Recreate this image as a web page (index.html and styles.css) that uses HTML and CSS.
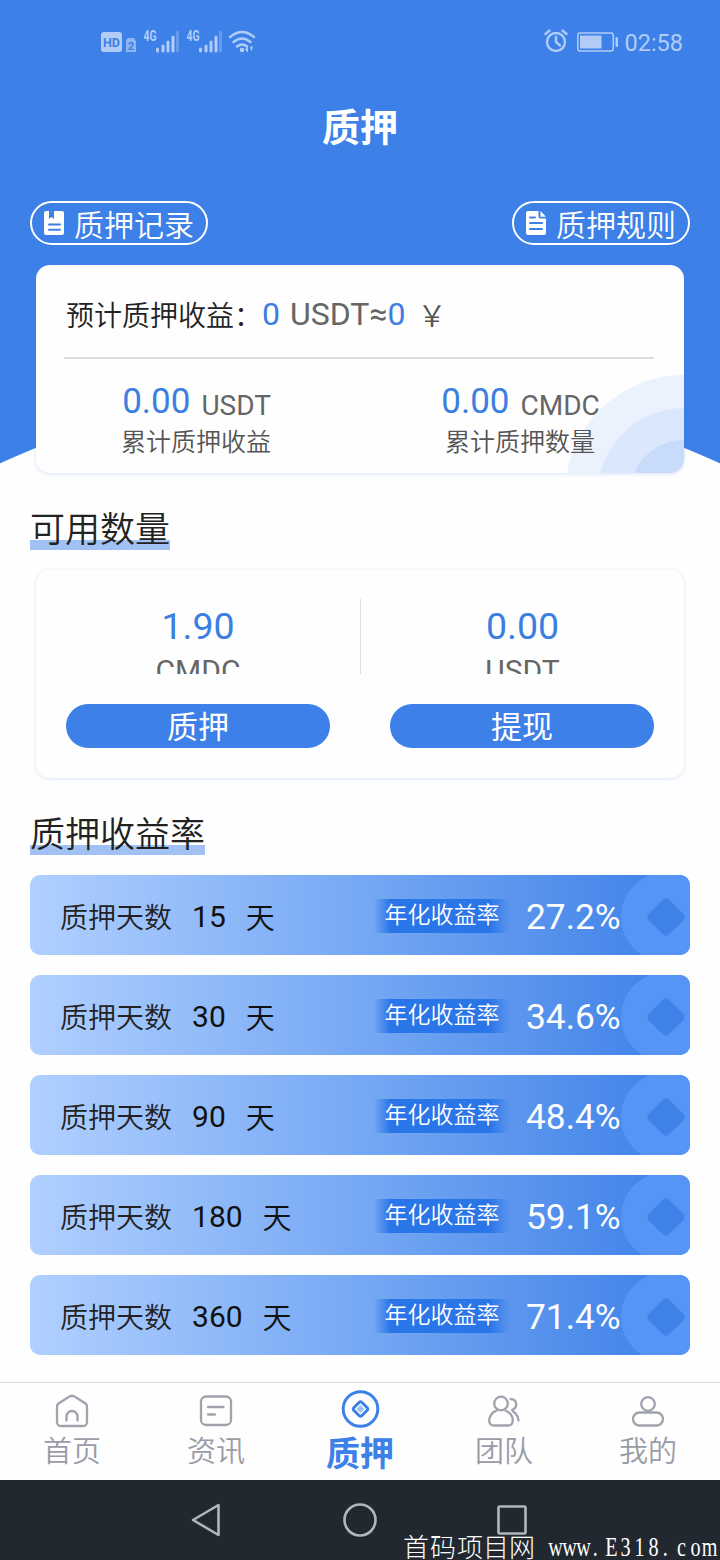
FILE: index.html
```
<!DOCTYPE html>
<html lang="zh-CN">
<head>
    <meta charset="UTF-8">
    <meta name="viewport" content="width=device-width, initial-scale=1.0">
    <title>质押</title>
    <link rel="stylesheet" href="styles.css">
</head>
<body>
    <div class="hero">
        <div class="status">
            <svg class="status__left" width="158" height="28" viewBox="0 0 158 28">
                <rect x="1" y="4" width="21" height="20" rx="3"/>
                <text class="status__hd" x="3" y="18.5" textLength="17" lengthAdjust="spacingAndGlyphs">HD</text>
                <path d="M28 10h6l2 3v11H26V12z" opacity=".7"/>
                <text class="status__two" x="27.8" y="22">2</text>
                <text class="status__net" x="43.5" y="12.5" textLength="13" lengthAdjust="spacingAndGlyphs">4G</text>
                <path class="bars" d="M57.5 23v-2M63 23v-5M68 23v-9M73 23V9"/>
                <path class="bars bars_dim" d="M77.500 23V4"/>
                <text class="status__net" x="86.5" y="12.5" textLength="13" lengthAdjust="spacingAndGlyphs">4G</text>
                <path class="bars" d="M100.500 23v-2M106 23v-5M111 23v-9M116 23V9"/>
                <path class="bars bars_dim" d="M120.500 23V4"/>
                <path class="wifi" d="M130 9q12-10 24 0M133.500 14q8.500-7 17 0M137 18.500q5-4 10 0"/>
                <circle cx="142" cy="22" r="2.300"/>
                <path d="M145 21.500l3-3v6zM150 18.500h3l-1.500 5z"/>
            </svg>
            <div class="status__right">
                <svg width="76" height="28" viewBox="0 0 76 28">
                    <circle class="clock" cx="13" cy="14" r="9"/>
                    <path class="clock" d="M13 9v5l4 3.500M2.500 6l4-3.500M19.500 2.500l4 3.500"/>
                    <rect class="clock clock_thin" x="34.800" y="5" width="35.500" height="18" rx="2.500"/>
                    <rect x="37" y="7.500" width="21.500" height="13"/>
                    <rect x="72.500" y="9" width="2.500" height="10" rx="1"/>
                </svg>
                <span>02:58</span>
            </div>
        </div>
        <h1 class="title">质押</h1>
        <div class="links">
            <a class="pill">
                <svg width="20" height="24" viewBox="0 0 20 24">
                    <path fill="#fff" d="M2 0h3v8l2.500-2L10 8V0h8a2 2 0 0 1 2 2v20a2 2 0 0 1-2 2H2a2 2 0 0 1-2-2V2a2 2 0 0 1 2-2z"/>
                    <path class="lines" d="M5 13.500h11M5 18.800h11"/>
                </svg>
                <span>质押记录</span>
            </a>
            <a class="pill">
                <svg width="20" height="24" viewBox="0 0 20 24">
                    <path fill="#fff" d="M2 0h10.500v5.500a2 2 0 0 0 2 2H20V22a2 2 0 0 1-2 2H2a2 2 0 0 1-2-2V2a2 2 0 0 1 2-2zM14.500 0L20 5.700h-5.500z"/>
                    <path class="lines" d="M4 6.500h5M4 12h12M4 18h12"/>
                </svg>
                <span>质押规则</span>
            </a>
        </div>
    </div>

    <div class="card income">
        <svg class="income__waves" width="119" height="98" viewBox="0 0 119 98">
            <circle cx="119" cy="119" r="119" fill="#ebf1fd"/>
            <circle cx="119" cy="119" r="86" fill="#dae7fc"/>
            <circle cx="119" cy="119" r="54" fill="#c8dbfa"/>
        </svg>
        <div class="income__top">
            <span class="income__label">预计质押收益：</span><b>0</b><span class="income__unit">USDT≈</span><b>0</b><span class="income__yen">￥</span>
        </div>
        <div class="income__row">
            <div class="income__item">
                <div class="income__sum"><b>0.00</b><span>USDT</span></div>
                <p>累计质押收益</p>
            </div>
            <div class="income__item">
                <div class="income__sum"><b>0.00</b><span>CMDC</span></div>
                <p>累计质押数量</p>
            </div>
        </div>
    </div>

    <h2 class="heading">可用数量</h2>
    <div class="card balance">
        <div class="balance__item">
            <div class="balance__info"><b>1.90</b><span>CMDC</span></div>
            <button type="button" class="button">质押</button>
        </div>
        <div class="balance__item">
            <div class="balance__info"><b>0.00</b><span>USDT</span></div>
            <button type="button" class="button">提现</button>
        </div>
    </div>

    <h2 class="heading heading_rates">质押收益率</h2>
    <div class="rates" id="rates"></div>

    <div class="tabs">
        <a class="tab">
            <svg width="40" height="40" viewBox="0 0 40 40">
                <path d="M17.500 5.500L6.500 12.500Q5 13.500 5 15.500V31a4 4 0 0 0 4 4h22a4 4 0 0 0 4-4V15.500q0-2-1.500-3L22.500 5.500Q20 4 17.500 5.500zM14.500 29.500V25.500a5.500 5.500 0 0 1 11 0v4"/>
            </svg>
            <span>首页</span>
        </a>
        <a class="tab">
            <svg width="40" height="40" viewBox="0 0 40 40">
                <rect x="5" y="5.500" width="30" height="28.500" rx="5"/>
                <path d="M12 16h15.500M12 23.500h7"/>
            </svg>
            <span>资讯</span>
        </a>
        <a class="tab tab_active">
            <svg width="40" height="40" viewBox="0 0 40 40">
                <circle cx="20.500" cy="18" r="17.300"/>
                <path d="M19 11.500L14 16.500q-1.500 1.500 0 3L19 24.500q1.500 1.500 3 0L27 19.500q1.500-1.500 0-3L22 11.500q-1.500-1.500-3 0z"/>
                <path class="tab__core" d="M20.500 14l4 4-4 4-4-4z"/>
            </svg>
            <span>质押</span>
        </a>
        <a class="tab">
            <svg width="40" height="40" viewBox="0 0 40 40">
                <circle cx="17" cy="12.500" r="6.800"/>
                <path d="M12.500 19.500Q5 23 5.200 30Q5.500 34.500 10 34.500H24Q28.500 34.500 28.800 30Q29 23 21.500 19.500M26.500 8.200c6.500 0 8 8 1.500 10.800M29 20.500q5 3 5.500 9"/>
            </svg>
            <span>团队</span>
        </a>
        <a class="tab">
            <svg width="40" height="40" viewBox="0 0 40 40">
                <circle cx="20" cy="13" r="6.800"/>
                <rect x="5" y="21.500" width="30" height="13" rx="6.500"/>
            </svg>
            <span>我的</span>
        </a>
    </div>

    <div class="navbar">
        <svg width="720" height="80" viewBox="0 0 720 80">
            <path class="navbar__icon" d="M193 40L218.500 25V55z"/>
            <circle class="navbar__icon" cx="360" cy="40" r="15.500"/>
            <rect class="navbar__icon" x="498.500" y="26.500" width="27" height="27" rx="1"/>
        </svg>
        <svg class="watermark" width="318" height="40" viewBox="0 0 318 40">
            <text class="watermark__cn" x="1 28 55 81 107" y="36.5">首码项目网</text>
            <text class="watermark__url" transform="scale(.72 1)" x="213.200 232.600 252.100 268.500 291 310.400 329.900 349.300 365.500 388.200 407.600 427.100" y="36">www.E318.com</text>
        </svg>
    </div>

    <script>
        let list = [
            [15, '27.2%'],
            [30, '34.6%'],
            [90, '48.4%'],
            [180, '59.1%'],
            [360, '71.4%']
        ];

        for (let item of list)
        {
            let div = document.createElement('div');
            div.className = 'rate';
            div.innerHTML = `<span class="rate__label">质押天数</span>
                <span class="rate__days">${item[0]}</span>
                <span class="rate__unit">天</span>
                <span class="rate__tag">年化收益率</span>
                <span class="rate__value">${item[1]}</span>
                <svg class="rate__coin" width="69" height="80" viewBox="0 0 69 80">
                    <circle cx="45" cy="42" r="45" fill="#5595f5"/>
                    <rect x="30.500" y="27.500" width="29" height="29" rx="4.500" transform="rotate(45 45 42)" fill="#4083e8"/>
                </svg>`;
            rates.append(div);
        }
    </script>
</body>
</html>
```
FILE: styles.css
```
* {
    box-sizing: border-box;
    margin: 0px;
    padding: 0px;
}
body {
    width: 720px;
    height: 1560px;
    overflow: hidden;
    background-color: #fefefe;
    font-family: Roboto, "Noto Sans CJK SC", sans-serif;
    font-weight: 350;
    color: #222;
}
b {
    font-weight: 400;
    color: #3c7fe0;
}
svg {
    display: block;
    flex-shrink: 0;
}
.hero {
    height: 480px;
    background: radial-gradient(circle 866px at 360px 1251px, #fefefe 865.5px, #3c80e8 866.5px);
}
.status {
    height: 84px;
    padding: 28px 37px 0px 100px;
    display: flex;
    justify-content: space-between;
    align-items: flex-start;
    fill: #b1cdf7;
    color: #b1cdf7;
}
.status__right {
    display: flex;
    align-items: center;
    gap: 5px;
    font-size: 23.500px;
    font-weight: 400;
    line-height: 28px;
}
.status__right span {
    padding-top: 1px;
}
.status__right svg {
    margin-top: -1px;
}
.status__hd {
    font-size: 13px;
    font-weight: 700;
    fill: #3c80e8;
}
.status__two {
    font-size: 11px;
    font-weight: 700;
    fill: #3c80e8;
}
.status__net {
    font-size: 14px;
    font-weight: 700;
}
.bars {
    stroke: #b1cdf7;
    stroke-width: 3;
    stroke-linecap: round;
}
.bars_dim {
    opacity: 0.35;
}
.wifi, .clock {
    fill: none;
    stroke: #b1cdf7;
    stroke-width: 2.4;
    stroke-linecap: round;
}
.clock_thin {
    stroke-width: 1.5;
}
.title {
    height: 86px;
    padding-top: 1px;
    font-size: 38px;
    font-weight: 700;
    line-height: 86px;
    text-align: center;
    color: #fff;
}
.links {
    padding: 31px 30px 0px;
    display: flex;
    justify-content: space-between;
}
.pill {
    width: 178px;
    height: 44px;
    padding: 0px 12px;
    border: 2px solid #fff;
    border-radius: 22px;
    display: flex;
    align-items: center;
    gap: 10px;
    font-size: 30px;
    line-height: 40px;
    white-space: nowrap;
    color: #fff;
}
.pill span {
    padding-top: 5px;
}
.lines {
    stroke: #3c80e8;
    stroke-width: 2;
    stroke-linecap: round;
}
.card {
    position: relative;
    width: 648px;
    height: 208px;
    margin: 0px auto;
    border-radius: 14px;
    background-color: #fefefe;
    box-shadow: 0px 1px 4px rgba(60, 128, 232, 0.2);
}
.income {
    margin-top: -215px;
    padding: 0px 30px 0px 28px;
    overflow: hidden;
}
.income__waves {
    position: absolute;
    right: 0px;
    bottom: 0px;
}
.income__top {
    height: 94px;
    padding: 5px 0px 0px 2px;
    border-bottom: 2px solid #ddd;
    display: flex;
    align-items: center;
    font-size: 32px;
    white-space: nowrap;
}
.income__label {
    padding-top: 1px;
    font-size: 28px;
}
.income__unit {
    margin-left: 10px;
    font-weight: 400;
    color: #666;
}
.income__yen {
    margin-left: 12px;
    font-size: 29px;
    color: #555;
}
.income__row {
    position: relative;
    margin: 0px -28px 0px -30px;
    padding-top: 22px;
    display: flex;
}
.income__item {
    width: 50%;
    text-align: center;
    line-height: 42px;
    color: #555;
}
.income__item p {
    padding-top: 2px;
    font-size: 25px;
    line-height: 36px;
}
.income__sum {
    height: 42px;
    padding-left: 1px;
    display: flex;
    justify-content: center;
    gap: 11px;
}
.income__sum b {
    font-size: 35px;
}
.income__sum span {
    padding-top: 4px;
    font-size: 28px;
    font-weight: 400;
    color: #666;
}
.heading {
    width: fit-content;
    height: 46px;
    margin: 31px 0px 21px 30px;
    padding-top: 4px;
    background: linear-gradient(#a1c1f4, #a1c1f4) left bottom / 100% 10px no-repeat;
    font-size: 35px;
    font-weight: 350;
    line-height: 46px;
}
.heading_rates {
    margin: 31px 0px 20px 30px;
}
.balance {
    margin-top: -1px;
    padding-top: 29px;
    display: flex;
}
.balance__item {
    width: 50%;
    padding: 0px 30px;
}
.balance__info {
    height: 75px;
    margin: 0px -30px;
    padding-top: 5px;
    overflow: hidden;
    text-align: center;
}
.balance__info b, .balance__info span {
    display: block;
    font-size: 37.500px;
    line-height: 44px;
}
.balance__info span {
    padding-top: 1px;
    font-size: 30px;
    font-weight: 400;
    color: #666;
}
.balance__item:last-child .balance__info {
    border-left: 1px solid #ddd;
}
.button {
    width: 264px;
    height: 44px;
    margin-top: 30px;
    padding-top: 4px;
    border: none;
    border-radius: 22px;
    background-color: #3c80e8;
    font-family: inherit;
    font-size: 31px;
    font-weight: 400;
    line-height: 40px;
    color: #fff;
}
.rates {
    height: 507px;
    padding: 0px 30px;
    display: flex;
    flex-direction: column;
    gap: 20px;
}
.rate {
    position: relative;
    height: 80px;
    padding: 2px 69px 0px 30px;
    flex-shrink: 0;
    overflow: hidden;
    border-radius: 10px;
    background: linear-gradient(90deg, #b0d0ff, #3c80e8);
    display: flex;
    align-items: center;
}
.rate__label {
    font-size: 28px;
}
.rate__days {
    margin-left: 20px;
    padding-top: 1px;
    font-size: 30px;
    font-weight: 400;
    color: #111;
}
.rate__unit {
    margin-left: 20px;
    font-size: 29px;
    color: #111;
}
.rate__tag {
    width: 136px;
    height: 34px;
    margin: 0px 16px 0px auto;
    background: linear-gradient(90deg, transparent, #2a75e8 12%, #2a75e8 85%, transparent);
    font-size: 23px;
    line-height: 34px;
    text-align: center;
    color: #fff;
}
.rate__value {
    width: 95px;
    padding-top: 2px;
    font-size: 35.300px;
    font-weight: 400;
    color: #fff;
    position: relative;
    z-index: 1;
}
.rate__coin {
    position: absolute;
    right: 0px;
    top: 0px;
}
.tabs {
    height: 98px;
    border-top: 1px solid #d9dadc;
    display: flex;
}
.tab {
    width: 144px;
    padding-top: 8px;
    display: flex;
    flex-direction: column;
    align-items: center;
    font-size: 29px;
    line-height: 36px;
    color: #999ca6;
}
.tab span {
    padding-top: 3px;
}
.tab svg {
    fill: none;
    stroke: #a0a3ad;
    stroke-width: 2.3;
    stroke-linecap: round;
    overflow: visible;
}
.tab_active {
    font-size: 34px;
    font-weight: 700;
    line-height: 42px;
    color: #3c80e8;
}
.tab_active span {
    padding-top: 2px;
}
.tab_active svg {
    stroke: #3c80e8;
    stroke-width: 3;
}
.tab svg .tab__core {
    fill: #9bc3fa;
    stroke: none;
}
.navbar {
    position: relative;
    height: 80px;
    background-color: #212830;
}
.navbar__icon {
    fill: none;
    stroke: #b3b6b9;
    stroke-width: 2.6;
    stroke-linejoin: round;
}
.watermark {
    position: absolute;
    right: 0px;
    bottom: 0px;
    fill: #fff;
}
.watermark__cn {
    font-size: 26px;
    font-weight: 300;
}
.watermark__url {
    font-family: "Liberation Serif", serif;
    font-size: 28px;
    font-weight: 400;
    text-anchor: middle;
}
```
